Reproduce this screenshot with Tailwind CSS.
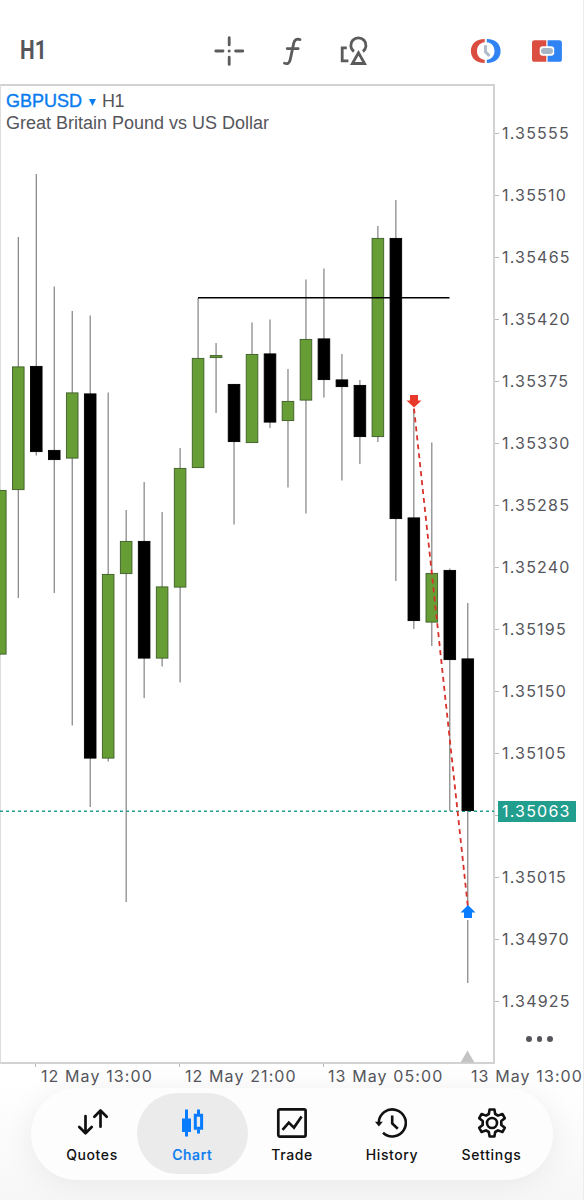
<!DOCTYPE html>
<html lang="en">
<head>
    <meta charset="UTF-8">
    <meta name="viewport" content="width=device-width, initial-scale=1.0">
    <script src="https://cdn.jsdelivr.net/npm/@tailwindcss/browser@4"></script>
    <title>GBPUSD H1</title>
</head>
<body class="bg-white font-['Inter',sans-serif] text-[#55565b]">
    <div class="relative flex flex-col w-[584px] h-[1200px] overflow-hidden border-r border-[#ececec] bg-linear-to-b from-white from-90% to-[#f7f7f7]">
        <!-- Toolbar -->
        <header class="flex items-center h-[84px] shrink-0 pt-[17px] pl-5">
            <button class="w-[193px] text-left font-['Roboto',sans-serif] font-bold text-[25px] leading-none"><span class="inline-block origin-left scale-x-[0.83]">H1</span></button>
            <svg class="w-8 h-8 shrink-0" viewBox="0 0 32 32" fill="none" stroke="#5b5b5b" stroke-width="2.8" stroke-linecap="round">
                <path d="M16.200 2.700v7.200M16.200 22.200v7.200M2.800 16h7.200M22.600 16h7.200"/>
                <circle cx="16.200" cy="16" r="1.500" fill="#5b5b5b" stroke="none"/>
            </svg>
            <svg class="w-8 h-8 shrink-0 ml-[31px]" viewBox="0 0 32 32" fill="none" stroke="#5b5b5b" stroke-width="2.800" stroke-linecap="round">
                <path d="M24 4.600c-3.600-1.200-5.500.4-6.300 3.600l-3.400 16.200c-.7 3.400-2.500 5-5.800 3.800M11.200 13.600h11"/>
            </svg>
            <svg class="w-8 h-8 shrink-0 ml-[30px]" viewBox="0 0 32 32" fill="none" stroke="#5b5b5b" stroke-width="2.800">
                <path d="M8.800 12.900H4.200v13h6.200"/>
                <path d="M15.900 16.500a7.600 7.600 0 1 1 9 0"/>
                <path d="M20.500 17.800l-6.100 10.700h12.200z"/>
            </svg>
            <svg class="w-8 h-8 shrink-0 ml-[100px]" viewBox="0 0 32 32">
                <path d="M14.700 4C5.500 4 .9 9.500.9 16s4.600 12 13.800 12v-3.200C9.500 24.200 7 20.500 7 16s2.500-8.200 7.700-8.800z" fill="#db4d40"/>
                <path d="M16.800 4c9.200 0 13.800 5.500 13.800 12s-4.600 12-13.800 12v-3.200c5.200-.6 7.700-4.300 7.700-8.800s-2.500-8.200-7.700-8.800z" fill="#2f83f3"/>
                <path d="M15.500 10.300v6.500l4 4.300" fill="none" stroke="#aebccb" stroke-width="3"/>
            </svg>
            <svg class="w-8 h-8 shrink-0 ml-[29px]" viewBox="0 0 32 32">
                <path d="M3.600 5.300h11.700v21.500H3.600A2.600 2.600 0 0 1 1 24.200V7.900a2.600 2.600 0 0 1 2.600-2.600z" fill="#db4d40"/>
                <path d="M16.600 5.300h11.700a2.600 2.600 0 0 1 2.600 2.600v16.300a2.600 2.600 0 0 1-2.600 2.600H16.600z" fill="#2f83f3"/>
                <rect x="8.700" y="11.200" width="14.500" height="9.600" rx="3" fill="#fff"/>
                <rect x="10" y="12.900" width="12" height="6.200" rx="3" fill="#a7b6c5"/>
            </svg>
        </header>

        <!-- Chart and price scale -->
        <main class="flex h-[980px] shrink-0">
            <section class="relative w-[495px] shrink-0 border-t-2 border-r-2 border-b-2 border-l border-[#d2d2d2] border-l-[#dddddd]">
                <div class="absolute left-[5px] top-1 font-['Liberation_Sans',sans-serif] text-[18px] leading-[22px] whitespace-nowrap">
                    <div class="flex items-center">
                        <span class="text-[#0a7cf0] [-webkit-text-stroke:0.4px]">GBPUSD</span>
                        <svg class="w-[7px] h-[7px] ml-[7px] mt-0.5" viewBox="0 0 7 7"><path d="M0 0h7L3.500 7z" fill="#0a7cf0"/></svg>
                        <span class="ml-[6px] tracking-[-0.5px]">H1</span>
                    </div>
                    <div>Great Britain Pound vs US Dollar</div>
                </div>
                <svg id="plot" class="absolute left-[-1px] top-[-2px] w-[495px] h-[980px]" viewBox="0 84 495 980">
                    <path d="M0 811.200H494" stroke="#219e8e" stroke-width="1.500" stroke-dasharray="3 3"/>
                    <g id="candles"></g>
                    <path d="M198 297.700H449.500" stroke="#000" stroke-width="1.600"/>
                    <path d="M414 408.500L467.800 906" stroke="#d8322a" stroke-width="1.800" stroke-dasharray="5 4"/>
                    <path d="M464 918h7.500v2H464z" fill="#fff"/>
                    <path d="M410 395h8v5.500h3.500l-7.500 7-7.500-7h3.500z" fill="#e8382a"/>
                    <path d="M464 918h8v-5.500h3.500l-7.500-7.500-7.500 7.500h3.500z" fill="#0a7cff"/>
                    <path d="M467.500 1050.500l7 12h-14z" fill="#c4c4c4"/>
                </svg>
            </section>
            <aside class="relative flex flex-col w-[88px] shrink-0 pt-[18px] text-[16px] leading-[62px] tracking-[1.200px]">
                <div class="flex items-center h-[62px]"><i class="w-1 h-px bg-[#bbb] mr-[3px]"></i>1.35555</div>
                <div class="flex items-center h-[62px]"><i class="w-1 h-px bg-[#bbb] mr-[3px]"></i>1.35510</div>
                <div class="flex items-center h-[62px]"><i class="w-1 h-px bg-[#bbb] mr-[3px]"></i>1.35465</div>
                <div class="flex items-center h-[62px]"><i class="w-1 h-px bg-[#bbb] mr-[3px]"></i>1.35420</div>
                <div class="flex items-center h-[62px]"><i class="w-1 h-px bg-[#bbb] mr-[3px]"></i>1.35375</div>
                <div class="flex items-center h-[62px]"><i class="w-1 h-px bg-[#bbb] mr-[3px]"></i>1.35330</div>
                <div class="flex items-center h-[62px]"><i class="w-1 h-px bg-[#bbb] mr-[3px]"></i>1.35285</div>
                <div class="flex items-center h-[62px]"><i class="w-1 h-px bg-[#bbb] mr-[3px]"></i>1.35240</div>
                <div class="flex items-center h-[62px]"><i class="w-1 h-px bg-[#bbb] mr-[3px]"></i>1.35195</div>
                <div class="flex items-center h-[62px]"><i class="w-1 h-px bg-[#bbb] mr-[3px]"></i>1.35150</div>
                <div class="flex items-center h-[62px]"><i class="w-1 h-px bg-[#bbb] mr-[3px]"></i>1.35105</div>
                <div class="flex items-center h-[62px]"><i class="w-1 h-px bg-[#bbb]"></i></div>
                <div class="flex items-center h-[62px]"><i class="w-1 h-px bg-[#bbb] mr-[3px]"></i>1.35015</div>
                <div class="flex items-center h-[62px]"><i class="w-1 h-px bg-[#bbb] mr-[3px]"></i>1.34970</div>
                <div class="flex items-center h-[62px]"><i class="w-1 h-px bg-[#bbb] mr-[3px]"></i>1.34925</div>
                <div class="flex gap-[5px] pl-[31px] pt-[4px]">
                    <i class="w-[5.500px] h-[5.500px] rounded-full bg-[#55565b]"></i>
                    <i class="w-[5.500px] h-[5.500px] rounded-full bg-[#55565b]"></i>
                    <i class="w-[5.500px] h-[5.500px] rounded-full bg-[#55565b]"></i>
                </div>
                <div class="absolute left-[3px] top-[717px] w-[78px] h-[21px] pl-1 bg-[#219e8e] text-white leading-[21px]">1.35063</div>
            </aside>
        </main>

        <!-- Time scale -->
        <div class="flex h-6 shrink-0 pl-[35px] text-[16px] leading-[24px] tracking-[1.100px] whitespace-nowrap">
            <div class="flex w-[144px] shrink-0"><i class="w-px h-[3px] bg-[#bbb] mr-[5px]"></i>12 May 13:00</div>
            <div class="flex w-[144px] shrink-0"><i class="w-px h-[3px] bg-[#bbb] mr-[5px]"></i>12 May 21:00</div>
            <div class="flex w-[144px] shrink-0"><i class="w-px h-[3px] bg-[#bbb] mr-[4px]"></i>13 May 05:00</div>
            <div class="flex w-[116px] shrink-0"><i class="w-px h-[3px] bg-[#bbb] mr-[4px]"></i>13 May 13:00</div>
        </div>

        <!-- Tab bar -->
        <nav class="grid grid-cols-5 w-[522px] h-[92px] shrink-0 ml-[31px] px-[11px] rounded-full bg-[#fdfdfd] shadow-[0_4px_32px_rgba(0,0,0,0.07)] text-[#111] text-[14px] font-medium tracking-[0.600px] leading-5">
            <a class="flex flex-col items-center pt-[19px]">
                <svg class="w-8 h-8" viewBox="0 0 32 32" fill="none" stroke="#111" stroke-width="2.700" stroke-linecap="round" stroke-linejoin="round">
                    <path d="M9.500 9v17M3.300 20l6.200 6.200 6.200-6.200M24.500 19.700v-16M18.400 9.700L24.500 3.500l6.200 6.200"/>
                </svg>
                <span class="mt-[6px]">Quotes</span>
            </a>
            <a class="flex flex-col items-center h-[81px] mt-[5px] ml-[-5.500px] mr-[-6px] pt-[14px] rounded-full bg-[#ebebeb] text-[#087cf0]">
                <svg class="w-8 h-8" viewBox="0 0 32 32" fill="none" stroke="#087cff" stroke-width="3">
                    <path d="M10.500 2.500v27M22.500 2.500v6M22.500 22.500v4"/>
                    <path d="M6 11.500h9v13.500H6z" fill="#087cff" stroke="none"/>
                    <path d="M19.300 8.300h6.300v13h-6.300z"/>
                </svg>
                <span class="mt-[6px] [-webkit-text-stroke:0.2px]">Chart</span>
            </a>
            <a class="flex flex-col items-center pt-[19px]">
                <svg class="w-8 h-8" viewBox="0 0 32 32" fill="none" stroke="#111" stroke-width="2.700" stroke-linejoin="round">
                    <rect x="2.300" y="2.300" width="27.300" height="27.300" rx="1.500"/>
                    <path d="M6.500 22.800l6.300-7.200 5.200 5 7.600-11.200" stroke-linejoin="miter"/>
                </svg>
                <span class="mt-[6px]">Trade</span>
            </a>
            <a class="flex flex-col items-center pt-[19px]">
                <svg class="w-8 h-8 -ml-[3px]" viewBox="0 0 32 32" fill="none" stroke="#111" stroke-width="2.600">
                    <path d="M3.800 15.500a13.500 13.500 0 1 1 4.200 10.200"/>
                    <path d="M0 14.800h7.800L3.900 19.500z" fill="#111" stroke="none"/>
                    <path d="M17.200 8.500v8l5.600 5.300"/>
                </svg>
                <span class="mt-[6px]">History</span>
            </a>
            <a class="flex flex-col items-center pt-[19px] pr-[1px]">
                <svg class="w-8 h-8" viewBox="0 0 32 32" fill="none" stroke="#111" stroke-width="2.600" stroke-linejoin="round">
                    <path d="M13.600 2.500h4.800l.8 4.500 2.800 1.600 4.400-1.600 2.400 4.200-3.500 2.900v3.800l3.500 2.900-2.400 4.200-4.400-1.600-2.800 1.600-.8 4.500h-4.800l-.8-4.500L10 23.400 5.600 25l-2.400-4.200 3.500-2.900v-3.800l-3.500-2.900L5.600 7 10 8.600 12.800 7z"/>
                    <circle cx="16" cy="16" r="5"/>
                </svg>
                <span class="mt-[6px] tracking-[0.700px]">Settings</span>
            </a>
        </nav>
    </div>

    <script>
        // high, body top, body bottom, low, rising
        const candles = [
            [490, 490, 654.5, 654.5, 1],
            [237, 366.5, 490, 598, 1],
            [174, 366, 452, 455.5, 0],
            [286.5, 450, 460, 593, 0],
            [311, 392.5, 458.5, 725.5, 1],
            [315.5, 393.5, 758.5, 807, 0],
            [392.5, 574, 758.5, 761.5, 1],
            [510, 541, 574, 902, 1],
            [482, 541, 658.5, 698, 0],
            [512, 586.5, 658.5, 666.5, 1],
            [448, 468, 587.5, 682.5, 1],
            [298, 358, 468, 468, 1],
            [343, 355.2, 358, 413, 1],
            [384, 384, 442, 524.5, 0],
            [322.5, 354, 443, 443, 1],
            [319.5, 353.5, 422.5, 428, 0],
            [369, 401, 421, 487.5, 1],
            [279.5, 339, 400.5, 513.5, 1],
            [268.5, 338.5, 380, 397.5, 0],
            [354, 379.5, 387, 480.5, 0],
            [380, 385, 437, 464, 0],
            [226, 238, 437, 442, 1],
            [200, 238, 519, 581, 0],
            [409, 517.5, 621, 629, 0],
            [442.5, 573, 622.5, 646, 1],
            [568.5, 570, 660, 811, 0],
            [603, 658.5, 811, 983, 0]
        ];
        document.getElementById('candles').innerHTML = candles.map(([high, top, bottom, low, up], i) => {
            const x = 0.3 + i * 17.98;
            return `<path d="M${x} ${high}V${low}" stroke="#777" stroke-width="1.1"/>
                <rect x="${x - 5.8}" y="${top + 0.4}" width="11.6" height="${bottom - top - 0.8}" fill="${up ? '#669e35' : '#000'}" stroke="${up ? '#3f5c28' : '#000'}" stroke-width="0.9"/>`;
        }).join('');
    </script>
</body>
</html>
